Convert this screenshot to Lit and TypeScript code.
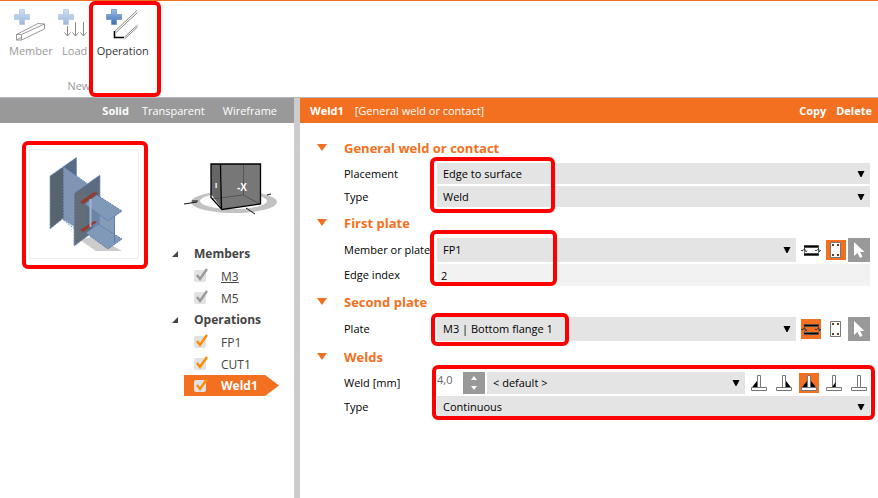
import { LitElement, html, css, svg, nothing, TemplateResult } from "lit";
import { customElement, property, state } from "lit/decorators.js";
import { classMap } from "lit/directives/class-map.js";

const plus = (faded: boolean) => svg`
  <defs><linearGradient id="plus" x1="0" y1="0" x2="0" y2="1">
    <stop offset="0" stop-color="#9dbfe8"/><stop offset="1" stop-color="#3f6fb0"/>
  </linearGradient></defs>
  <path opacity=${faded ? 0.5 : 1} d="M5.500 .5h5v5h5v5h-5v5h-5v-5h-5v-5h5z" fill="url(#plus)" stroke="#6a94cc" stroke-width=".8"/>`;

const memberIcon = html`<svg width="34" height="34" viewBox="0 0 34 34" aria-hidden="true">
  ${plus(true)}
  <path d="M2.500 25.500L24 14.500l6.500.5v5L7.500 31H2.500zM2.500 25.500h5V31M7.500 25.500L30.500 15M2.500 31L8 28" fill="none" stroke="#999"/>
</svg>`;
const loadIcon = html`<svg width="34" height="34" viewBox="0 0 34 34" aria-hidden="true">
  ${plus(true)}
  <path d="M9.500 17v10M17.500 13v14M25.500 13v14M6.500 23.500l3 3.500 3-3.500M14.500 23.500l3 3.500 3-3.500M22.500 23.500l3 3.500 3-3.500" fill="none" stroke="#888"/>
</svg>`;
const operationIcon = html`<svg width="34" height="34" viewBox="0 0 34 34" aria-hidden="true">
  ${plus(false)}
  <path d="M8.500 22.500L31 1.500M10 23.500L31.500 3.500M18.500 28L31.500 16M18.500 30L31.500 18" fill="none" stroke="#888"/>
  <path d="M8.500 22v6.500H18" fill="none" stroke="#000" stroke-width="1.600"/>
</svg>`;

const caret = html`<svg class="caret" width="8" height="6" viewBox="0 0 8 6" aria-hidden="true"><path d="M.5 0h7L4.500 6h-1z"/></svg>`;

const memberGlyph = html`<svg width="20" height="20" viewBox="0 0 20 20" aria-hidden="true">
  <path d="M3.500 5v11M17.500 5v11" stroke="#777" fill="none"/>
  <path d="M0 10.500h2l1.500-2 1.500 3.500 1-1.500M14 10.500h2l1.500-2 1 3.500.5-1.500h1" stroke="#222" stroke-width=".8" fill="none"/>
  <path d="M3 6.500h14.500M3 14.500h14.500" stroke="#666" stroke-width="3"/>
  <path d="M3 6.500h14.500M3 14.500h14.500" stroke="#000" stroke-width="1.600"/>
</svg>`;
const plateGlyph = html`<svg width="20" height="20" viewBox="0 0 20 20" aria-hidden="true">
  <path d="M4.500 2.500h10v15h-10z" fill="#fff" stroke="#777"/>
  <path d="M6 4h2v2H6zM11 4h2v2h-2zM6 14h2v2H6zM11 14h2v2h-2z" fill="#5b4034"/>
</svg>`;
const pointerGlyph = html`<svg width="22" height="24" viewBox="0 0 22 24" aria-hidden="true">
  <path d="M6 4v14l3.500-3 2.500 5 2.500-1.200-2.300-4.800H16.500z" fill="#fff"/>
</svg>`;
const weldGlyph = (kind: string) => html`<svg width="20" height="20" viewBox="0 0 20 20" aria-hidden="true">
  ${kind === "left" || kind === "both" ? svg`<path d="M8 8v7H2.500z"/>` : nothing}
  ${kind === "right" || kind === "both" ? svg`<path d="M12 8v7h5.500z"/>` : nothing}
  <path d="M8.500 2.500h3v12h-3z" fill="#fff" stroke="#777"/>
  ${kind === "butt" ? svg`<path d="M11.500 9v5.500H8z"/>` : nothing}
  <path d="M2.500 14.500h15v3h-15z" fill="#fff" stroke="#777"/>
</svg>`;

const jointPicture = html`<svg width="108" height="108" viewBox="30 150 108 108" role="img" aria-label="Welded joint">
  <path d="M80 240l15-4 27 15H96z" fill="#ccc"/>
  <path d="M50 176l26.500-18.500v50L50 229z" fill="#57636f"/>
  <path d="M63.500 166.500l13-9v50l-13 13z" fill="#596c86"/>
  <path d="M50 176l26.500-18.500v50L50 229z" fill="none" stroke="#7c9cc9" stroke-dasharray="2 1"/>
  <path d="M63.500 167l23 16v52L64 220z" fill="#7e96b4"/>
  <path d="M63.500 167l23 16M63.500 220l15 12M63.500 167v53" fill="none" stroke="#6989b5" stroke-dasharray="2 1"/>
  <path d="M74 193l26-18v52l-26 19z" fill="#5b6b80"/>
  <path d="M74 193l12-8v52l-12 9z" fill="#626d79"/>
  <path d="M91 199l24 12v32l-24-18z" fill="#7189aa" opacity=".85"/>
  <path d="M74 193l26-18v52l-26 19z" fill="none" stroke="#7c9cc9" stroke-dasharray="2 1"/>
  <path d="M80 202l14-10 4 1-15 11zM80 230l14-9 3 1-14 10z" fill="#963b2c"/>
  <path d="M85 204l12-9 25 16-14 10zM86 233l12-9 24 15-14 10z" fill="#8199b9" stroke="#5c7cab" stroke-dasharray="2 1"/>
  <path d="M90.500 199v28" stroke="#a3b5ce" stroke-width="2"/>
  <path d="M114.500 216v27" stroke="#5c7cab"/>
</svg>`;

const viewCube = html`<svg width="96" height="56" viewBox="183 161 96 56" role="img" aria-label="View orientation">
  <path fill-rule="evenodd" d="M191 202a43 11 0 1 0 86 0a43 11 0 1 0-86 0zM200 201a33.500 8 0 1 0 67 0a33.500 8 0 1 0-67 0z" fill="#c2c2c2"/>
  <path d="M184 204l13-2M192 201l6 0M246 208l9 6M267 195l4-1" stroke="#111" fill="none"/>
  <path d="M221 164h39.500v40L222 209z" fill="#777"/>
  <path d="M211 164l10 0 1 45-11-15z" fill="#666"/>
  <path d="M243.500 165v30M212 199l31-4 17 9" fill="none" stroke="#555"/>
  <path d="M211 164h49.500v40L222 209.500l-11-12zM220.500 164l1 45" fill="none" stroke="#000" stroke-width="1.300"/>
  <text x="242" y="191" text-anchor="middle" fill="#fff" font-size="10" font-weight="700" font-family="Liberation Sans, sans-serif">-X</text>
  <text x="216" y="188" text-anchor="middle" fill="#fff" font-size="8" font-weight="700" font-family="Liberation Sans, sans-serif">I</text>
</svg>`;

/** Header strip and tree of the 3D view. */
@customElement("scene-panel")
class ScenePanel extends LitElement {
  @state() private selected = "Weld1";

  static styles = css`
    :host { display: block; }
    button { font: inherit; color: inherit; background: none; border: 0; padding: 0; cursor: pointer; }
    .modes { display: flex; justify-content: flex-end; align-items: center; height: 25px; padding-right: 17px; background: #999; color: #fff; }
    .modes button + button { margin-left: 13px; }
    .modes button:last-child { margin-left: 18px; }
    .modes .on { font-weight: 700; }
    .body { display: grid; grid-template-columns: 172px 1fr; }
    .preview { position: relative; justify-self: start; align-self: start; margin: 26px 0 0 29px; border: 1px solid #eee; line-height: 0; }
    .mark { position: absolute; inset: -9px -10px -11px -8px; border: 4px solid #f00; border-radius: 6px; pointer-events: none; }
    .cube { padding: 38px 0 0 11px; height: 82px; line-height: 0; }
    ul { list-style: none; margin: 0; padding: 0; }
    li { line-height: 22px; color: #444; font-size: 12px; }
    .group { display: flex; align-items: center; font-weight: 700; }
    .group svg { width: 6px; margin-right: 16px; }
    .item { display: flex; align-items: center; height: 22px; }
    .item > label { display: flex; position: relative; margin-left: 22px; width: 27px; height: 16px; }
    .item input { appearance: none; margin: 2px 0 0; width: 12px; height: 12px; border-radius: 2px; background: #e2e2e2; }
    .item button { padding-top: 1px; }
    .tick { position: absolute; left: 0; top: 0; pointer-events: none; }
    .item input:not(:checked) + .tick { display: none; }
    .under button { text-decoration: underline; }
    .selected { margin-left: 12px; width: 95px; height: 21px; background: #f37021; color: #fff; font-weight: 700; clip-path: polygon(0 0, 81px 0, 100% 50%, 81px 100%, 0 100%); }
    .selected > label { margin-left: 10px; }
  `;

  private group(name: string, items: TemplateResult[]) {
    return html`<li>
      <div class="group"><svg width="6" height="6" viewBox="0 0 6 6" aria-hidden="true"><path d="M6 0v6H0z" fill="#444"/></svg>${name}</div>
      <ul>${items}</ul>
    </li>`;
  }

  private item(name: string, colour: string, under = false) {
    return html`<li class=${classMap({ item: true, under, selected: name === this.selected })}>
      <label><input type="checkbox" checked aria-label=${name}>
        <svg class="tick" width="14" height="14" viewBox="0 0 14 14" aria-hidden="true"><path d="M3 7l3 4 7-10" fill="none" stroke=${colour} stroke-width="2.400"/></svg></label>
      <button @click=${() => (this.selected = name)}>${name}</button>
    </li>`;
  }

  render() {
    return html`
      <div class="modes"><button class="on">Solid</button><button>Transparent</button><button>Wireframe</button></div>
      <div class="body">
        <div class="preview">${jointPicture}<span class="mark"></span></div>
        <div>
          <div class="cube">${viewCube}</div>
          <ul>
            ${this.group("Members", [this.item("M3", "#999", true), this.item("M5", "#999")])}
            ${this.group("Operations", [this.item("FP1", "#ff8c00"), this.item("CUT1", "#ff8c00"), this.item("Weld1", "#ff8c00")])}
          </ul>
        </div>
      </div>`;
  }
}

/** Property grid of the selected operation. */
@customElement("property-panel")
class PropertyPanel extends LitElement {
  @property() name = "";
  @property() kind = "";

  static styles = css`
    :host { display: block; min-width: 0; }
    button, input, select { font: inherit; color: inherit; border: 0; margin: 0; padding: 0; border-radius: 0; }
    button { background: none; cursor: pointer; line-height: 0; }
    .head { display: flex; align-items: center; height: 25px; padding: 0 6px 0 10px; background: #f37021; color: #fff; }
    .head b, .head button { line-height: 16px; font-weight: 700; }
    .head button { margin-left: 10px; }
    .head span { margin-left: 11px; flex: 1; }
    .content { padding: 9px 8px 0 17px; }
    h2 { display: flex; align-items: center; height: 31px; margin: 0; font-size: 13px; font-weight: 700; color: #f37021; }
    h2 svg { margin-right: 17px; }
    .rows { position: relative; display: grid; gap: 2px; margin-left: 27px; }
    .row { display: grid; grid-template-columns: 93px 1fr; align-items: center; height: 21px; white-space: nowrap; }
    .mid { height: 22px; }
    .tall { height: 24px; }
    .field { display: flex; height: 100%; min-width: 0; align-items: center; }
    .drop { position: relative; flex: 1; height: 100%; min-width: 0; }
    .drop select { appearance: none; width: 100%; height: 100%; padding: 0 20px 0 6px; background: #e4e4e4; outline-offset: -1px; }
    .caret { position: absolute; right: 5px; top: calc(50% - 3px); pointer-events: none; }
    .index { width: 100%; height: 100%; padding-left: 4px; background: #f2f2f2; box-sizing: border-box; }
    .picks { display: flex; align-items: center; gap: 5px; margin-left: 5px; }
    .picks button { width: 20px; height: 20px; }
    .picks .on { background: #f37021; }
    .pointer { width: 22px; height: 24px; margin-left: 2px; background: #999; }
    .size { width: 26px; align-self: flex-start; background: none; color: #666; }
    .spin { display: grid; align-content: center; gap: 6px; width: 22px; height: 100%; margin-right: 2px; background: #999; justify-items: center; }
    .welds { margin-right: 1px; margin-left: 4px; }
    .mark { position: absolute; border: 4px solid #f00; border-radius: 6px; pointer-events: none; box-sizing: border-box; }
    .m-general { left: 86px; top: -6px; width: 125px; height: 56px; }
    .m-first { left: 86px; top: -8px; width: 127px; height: 56px; }
    .m-second { left: 87px; top: -4px; width: 138px; height: 33px; }
    .m-welds { left: 88px; top: -7px; right: -5px; height: 55px; }
  `;

  private title(text: string) {
    return html`<h2><svg width="10" height="7" viewBox="0 0 10 7" aria-hidden="true"><path d="M0 0h10L5 7z" fill="#f37021"/></svg>${text}</h2>`;
  }

  private drop(id: string, value: string) {
    return html`<div class="drop"><select id=${id} aria-label=${value}><option>${value}</option></select>${caret}</div>`;
  }

  private picks(member: boolean) {
    return html`<div class="picks">
        <button class=${classMap({ on: member })} aria-label="Member">${memberGlyph}</button>
        <button class=${classMap({ on: !member })} aria-label="Plate">${plateGlyph}</button>
      </div>
      <button class="pointer" aria-label="Pick in scene">${pointerGlyph}</button>`;
  }

  render() {
    return html`
      <div class="head"><b>${this.name}</b><span>[${this.kind}]</span><button>Copy</button><button>Delete</button></div>
      <div class="content">
        ${this.title("General weld or contact")}
        <div class="rows">
          <div class="row"><label for="placement">Placement</label>${this.drop("placement", "Edge to surface")}</div>
          <div class="row"><label for="type">Type</label>${this.drop("type", "Weld")}</div>
          <span class="mark m-general"></span>
        </div>
        ${this.title("First plate")}
        <div class="rows">
          <div class="row tall"><label for="first">Member or plate</label><div class="field">${this.drop("first", "FP1")}${this.picks(false)}</div></div>
          <div class="row mid"><label for="edge">Edge index</label><input class="index" id="edge" value="2"></div>
          <span class="mark m-first"></span>
        </div>
        ${this.title("Second plate")}
        <div class="rows">
          <div class="row tall"><label for="second">Plate</label><div class="field">${this.drop("second", "M3 | Bottom flange 1")}${this.picks(true)}</div></div>
          <span class="mark m-second"></span>
        </div>
        ${this.title("Welds")}
        <div class="rows">
          <div class="row mid"><label for="size">Weld [mm]</label><div class="field">
            <input class="size" id="size" value="4,0">
            <button class="spin" aria-label="Change size">
              <svg width="6" height="4" viewBox="0 0 6 4" aria-hidden="true"><path d="M0 4h6L3 0z" fill="#fff"/></svg>
              <svg width="6" height="4" viewBox="0 0 6 4" aria-hidden="true"><path d="M0 0h6L3 4z" fill="#fff"/></svg>
            </button>
            ${this.drop("material", "< default >")}
            <div class="picks welds">
              ${["left", "right", "both", "butt", "none"].map((k) => html`<button class=${classMap({ on: k === "both" })} aria-label=${k}>${weldGlyph(k)}</button>`)}
            </div>
          </div></div>
          <div class="row"><label for="weldtype">Type</label>${this.drop("weldtype", "Continuous")}</div>
          <span class="mark m-welds"></span>
        </div>
      </div>`;
  }
}

@customElement("app-root")
class AppRoot extends LitElement {
  static styles = css`
    :host { display: flex; flex-direction: column; min-height: 100vh; box-sizing: border-box; border-top: 1px solid #f37021; background: #fff; color: #000; font: 11px/16px "Open Sans", "Noto Sans", sans-serif; }
    .ribbon { display: flex; border-bottom: 1px solid #b4b8c0; }
    .set { display: flex; flex-direction: column; height: 96px; box-sizing: border-box; padding: 8px 0 2px 5px; }
    .tools { display: flex; flex: 1; align-items: flex-start; }
    .tools button { position: relative; display: flex; flex-direction: column; align-items: center; font: inherit; color: #999; background: none; border: 0; padding: 0 4px; }
    .tools .live { color: #333; }
    .tools .tight { padding: 0 1px; }
    .caption { text-align: center; color: #999; line-height: 18px; }
    .mark { position: absolute; left: -4px; right: -8px; top: -8px; height: 96px; box-sizing: border-box; border: 4px solid #f00; border-radius: 6px; background: none; pointer-events: none; }
    .work { flex: 1; display: grid; grid-template-columns: 294px 6px minmax(0, 1fr); }
    .split { background: #ccc; }
  `;

  render() {
    return html`
      <header class="ribbon"><div class="set">
        <div class="tools">
          <button disabled>${memberIcon}<span>Member</span></button>
          <button class="tight" disabled>${loadIcon}<span>Load</span></button>
          <button class="live">${operationIcon}<span>Operation</span><span class="mark"></span></button>
        </div>
        <div class="caption">New</div>
      </div></header>
      <main class="work">
        <scene-panel></scene-panel>
        <div class="split"></div>
        <property-panel name="Weld1" kind="General weld or contact"></property-panel>
      </main>`;
  }
}
